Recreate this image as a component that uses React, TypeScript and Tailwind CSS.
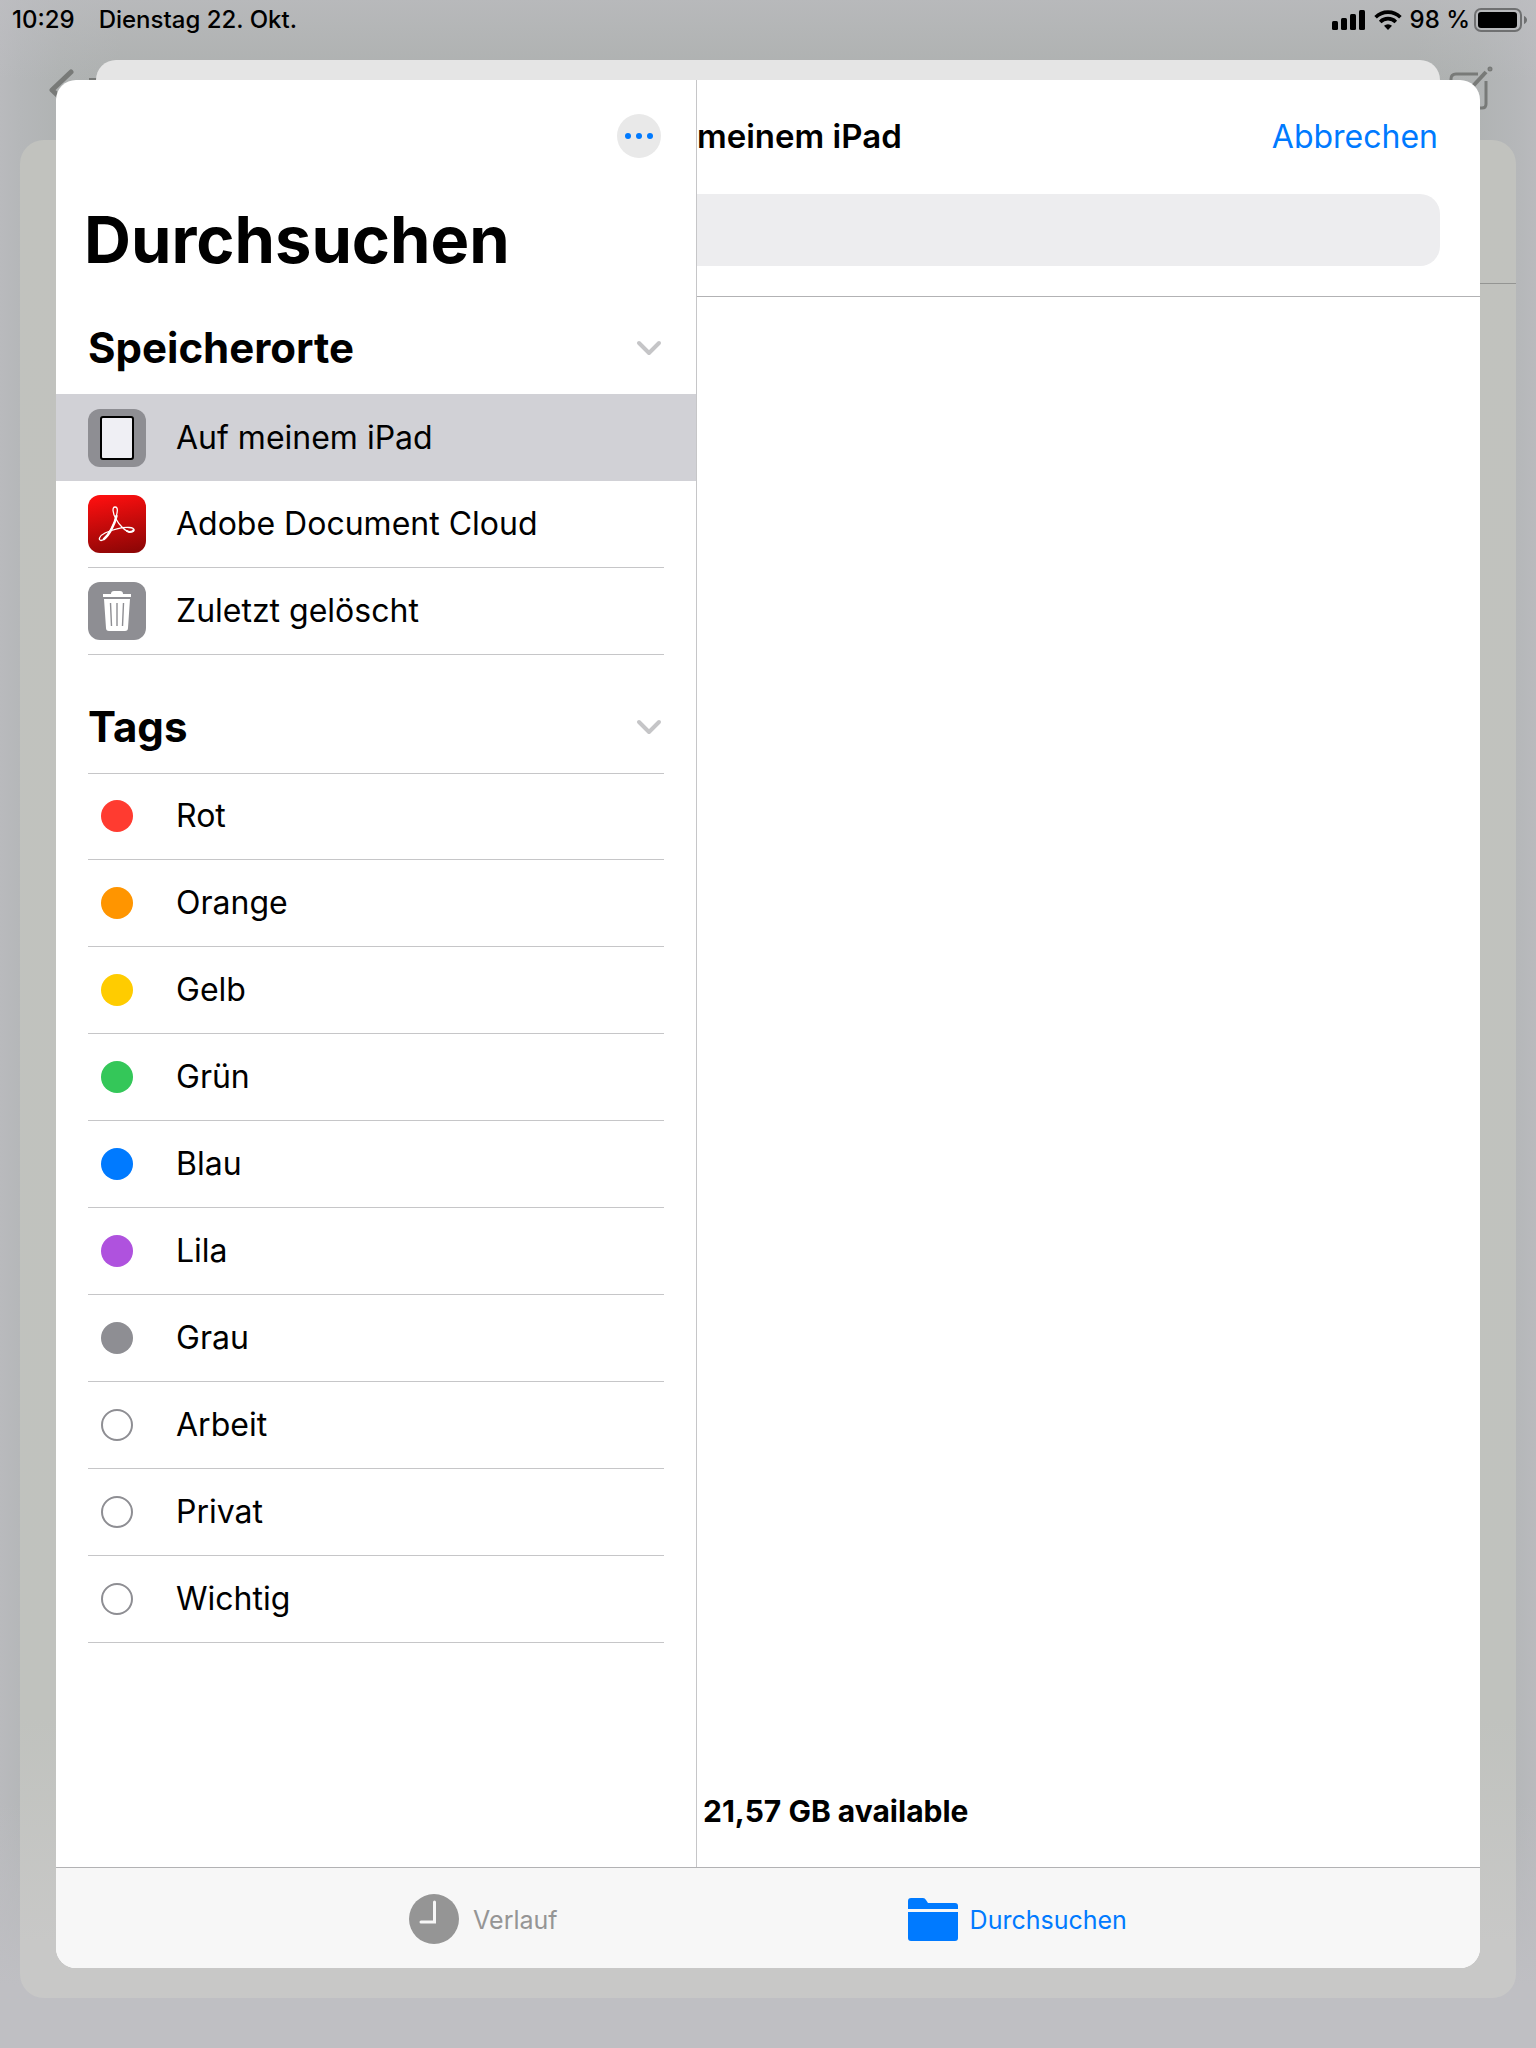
import type { ReactNode } from 'react';

type Tag = { name: string; dot: string };

const tags: Tag[] = [
  { name: 'Rot', dot: 'bg-[#ff3b30]' },
  { name: 'Orange', dot: 'bg-[#ff9500]' },
  { name: 'Gelb', dot: 'bg-[#ffcc00]' },
  { name: 'Grün', dot: 'bg-[#34c759]' },
  { name: 'Blau', dot: 'bg-[#007aff]' },
  { name: 'Lila', dot: 'bg-[#af52de]' },
  { name: 'Grau', dot: 'bg-[#8e8e93]' },
  { name: 'Arbeit', dot: 'border-2 border-[#8e8e93]' },
  { name: 'Privat', dot: 'border-2 border-[#8e8e93]' },
  { name: 'Wichtig', dot: 'border-2 border-[#8e8e93]' },
];

function StatusBar() {
  return (
    <header className="relative flex h-10 items-center justify-between pl-3 pr-2 text-2xl font-medium">
      <div className="flex gap-6">
        <span>10:29</span>
        <span>Dienstag 22. Okt.</span>
      </div>
      <div className="flex items-center gap-2">
        <svg className="h-5 w-[34px]" viewBox="0 0 34 20" aria-hidden="true">
          <rect x="0" y="11" width="6" height="9" rx="1.5" />
          <rect x="9" y="8" width="6" height="12" rx="1.5" />
          <rect x="18" y="4" width="6" height="16" rx="1.5" />
          <rect x="27" y="0" width="6" height="20" rx="1.5" />
        </svg>
        <svg className="h-5 w-7" viewBox="0 0 28 20" aria-hidden="true">
          <g fill="none" stroke="black" strokeWidth="3.6">
            <path d="M1.6 7.2a17.6 17.6 0 0 1 24.8 0" />
            <path d="M6.2 11.9a11 11 0 0 1 15.6 0" />
          </g>
          <path d="M14 20l-4-4.2a5.8 5.8 0 0 1 8 0z" />
        </svg>
        <div className="flex items-center gap-1">
          <span>98 %</span>
          <svg className="h-6 w-[54px]" viewBox="0 0 54 24" aria-hidden="true">
            <rect x="1" y="1" width="46" height="22" rx="6" fill="none" stroke="#6f7071" strokeWidth="2" />
            <rect x="4" y="4" width="39" height="16" rx="3" />
            <path d="M50 8c4 1.5 4 6.5 0 8z" fill="#6f7071" />
          </svg>
        </div>
      </div>
    </header>
  );
}

// Dimmed notes app behind the sheets
function NotesBackdrop() {
  return (
    <div className="absolute inset-0 bg-[linear-gradient(to_bottom,#bfbfc399_0px,#bfbfc300_80px,#bfbfc300_88%,#bfbfc3_97%),linear-gradient(to_right,#b9babd_0px,#b5b7b9_20px,#b0b3b3_60px,#adb0af_120px,#adb0af_calc(100%-120px),#b0b3b3_calc(100%-60px),#b5b7b9_calc(100%-20px),#b9babd)]">
      <svg className="absolute left-12 top-[67px] h-11 w-7" viewBox="0 0 28 44" fill="none" stroke="#787a78" strokeWidth="5" strokeLinecap="round" strokeLinejoin="round">
        <path d="M23 5L4 23L23 41" />
      </svg>
      <span className="absolute left-[89px] top-[78px] h-1 w-4 bg-[#787a78]" />
      <svg className="absolute right-[42px] top-[66px] h-11 w-[46px]" viewBox="0 0 46 44" fill="none" stroke="#787a78" strokeWidth="3">
        <path d="M30 8H8Q3 8 3 13V37Q3 42 8 42H34Q38 42 38 38V15" />
        <path d="M25 20L38 6" strokeWidth="4" />
        <circle cx="42" cy="3" r="1" />
      </svg>
      <div className="absolute inset-x-5 bottom-[50px] top-[140px] rounded-3xl bg-[linear-gradient(to_bottom,#c1c2be,#c0c2be_85%,#c8c8c7_97%)]">
        <div className="ml-auto mt-[143px] h-px w-1/2 bg-[#949593]" />
      </div>
    </div>
  );
}

function IPadIcon() {
  return (
    <svg className="size-[58px]" viewBox="0 0 58 58" aria-hidden="true">
      <rect width="58" height="58" rx="12" fill="#8e8e93" />
      <rect x="13" y="8" width="32" height="42" rx="2" fill="#efeff4" stroke="black" strokeWidth="2" />
    </svg>
  );
}

function AcrobatIcon() {
  return (
    <svg className="size-[58px]" viewBox="0 0 58 58" aria-hidden="true">
      <defs>
        <linearGradient id="acrobat" x1="0.4" y1="0" x2="0.6" y2="1">
          <stop offset="0" stopColor="#fb0f0f" />
          <stop offset="1" stopColor="#8f0606" />
        </linearGradient>
      </defs>
      <rect width="58" height="58" rx="12" fill="url(#acrobat)" />
      <g fill="none" stroke="white" strokeLinecap="round" strokeLinejoin="round">
        <path
          d="M27 12C24 12 24.5 18 28 24C31 30 38 37 42 37C47 37 48 33 41 32.5C33 32 24 35 17 38C11 41 10 45 13 45.5C18 45 27 30 29 18C30 13 28.5 12 27 12Z"
          strokeWidth="1.3"
        />
        <path d="M28.5 21C26.5 30 21 40 16 44" strokeWidth="2.4" />
        <path d="M39 36C41 37.5 45 37 45.5 35" strokeWidth="2" />
      </g>
    </svg>
  );
}

function TrashIcon() {
  return (
    <svg className="size-[58px]" viewBox="0 0 58 58" aria-hidden="true">
      <rect width="58" height="58" rx="12" fill="#8e8e93" />
      <path d="M15 12H23Q23 9 26 9H32Q35 9 35 12H43V15H15Z" fill="white" />
      <path d="M16 17H42L40 46Q40 49 37 49H21Q18 49 18 46Z" fill="white" />
      <path d="M22.5 21L23.5 44M29 21V44M35.5 21L34.5 44" stroke="#8e8e93" strokeWidth="1.4" />
    </svg>
  );
}

function Chevron() {
  return (
    <svg className="h-4 w-[26px]" viewBox="0 0 26 16" fill="none" stroke="#c5c5c7" strokeWidth="4" strokeLinecap="round" strokeLinejoin="round">
      <path d="M3 3L13 13L23 3" />
    </svg>
  );
}

function SectionHeader({ title }: { title: string }) {
  return (
    <button type="button" className="flex h-[92px] w-full items-center justify-between pl-8 pr-[34px]">
      <h2 className="text-[42px] font-bold leading-none">{title}</h2>
      <Chevron />
    </button>
  );
}

function Row({ icon, label, active = false }: { icon: ReactNode; label: string; active?: boolean }) {
  return (
    <li className={active ? 'bg-[#d1d1d6]' : ''}>
      <button
        type="button"
        className={
          active
            ? 'flex h-[87px] w-full items-center px-8 text-left text-[32px]'
            : 'mx-8 flex h-[87px] w-[calc(100%-64px)] items-center border-b border-[#c6c6c8] text-left text-[32px]'
        }
      >
        <span className="flex w-[58px] justify-center">{icon}</span>
        <span className="pl-[30px]">{label}</span>
      </button>
    </li>
  );
}

function Sidebar() {
  return (
    <nav className="w-[641px] shrink-0 border-r border-[#c6c6c8]">
      <div className="flex justify-end pr-[35px] pt-[34px]">
        <button type="button" aria-label="Mehr" className="flex size-11 items-center justify-center gap-[5px] rounded-full bg-[#e9e9e9]">
          <span className="size-1.5 rounded-full bg-[#007aff]" />
          <span className="size-1.5 rounded-full bg-[#007aff]" />
          <span className="size-1.5 rounded-full bg-[#007aff]" />
        </button>
      </div>
      <h1 className="pl-7 pt-[46px] text-[65px] font-bold leading-[72px]">Durchsuchen</h1>
      <div className="pt-[26px]">
        <SectionHeader title="Speicherorte" />
        <ul>
          <Row icon={<IPadIcon />} label="Auf meinem iPad" active />
          <Row icon={<AcrobatIcon />} label="Adobe Document Cloud" />
          <Row icon={<TrashIcon />} label="Zuletzt gelöscht" />
        </ul>
      </div>
      <div className="pb-32 pt-[26px]">
        <SectionHeader title="Tags" />
        <div className="mx-8 h-px bg-[#c6c6c8]" />
        <ul className="-mt-px">
          {tags.map((tag) => (
            <Row key={tag.name} icon={<span className={`size-8 rounded-full ${tag.dot}`} />} label={tag.name} />
          ))}
        </ul>
      </div>
    </nav>
  );
}

function FilesPane() {
  return (
    <section className="flex flex-1 flex-col">
      <div className="border-b border-[#b2b2b4] pb-[30px]">
        <div className="flex h-[114px] items-center justify-between pr-[42px]">
          <h2 className="text-[33px] font-semibold">meinem iPad</h2>
          <button type="button" className="text-[32px] text-[#007aff]">Abbrechen</button>
        </div>
        <div className="pr-10">
          <input type="search" aria-label="Suchen" className="block h-[72px] w-full rounded-r-[20px] bg-[#ededef] px-6 text-[32px] outline-none" />
        </div>
      </div>
      <p className="mt-auto pb-9 pl-1.5 text-[30px] font-bold leading-10">21,57 GB available</p>
    </section>
  );
}

function TabBar() {
  return (
    <footer className="flex h-[101px] items-center justify-center gap-[350px] border-t border-[#b2b2b4] bg-[#f7f7f7] pt-0.5 text-[25px]">
      <button type="button" className="flex items-center gap-3.5 text-[#959595]">
        <svg className="size-[50px]" viewBox="0 0 50 50" aria-hidden="true">
          <circle cx="25" cy="25" r="25" fill="#959595" />
          <path d="M25.5 8V28H12" fill="none" stroke="#f7f7f7" strokeWidth="3" strokeLinecap="round" />
        </svg>
        <span className="pt-1">Verlauf</span>
      </button>
      <button type="button" className="flex items-center gap-3 text-[#007aff]">
        <svg className="h-[43px] w-[50px]" viewBox="0 0 50 43" fill="#007aff" aria-hidden="true">
          <path d="M0 11V3Q0 0 3 0H15Q17 0 18 2L20 5H47Q50 5 50 8V11Z" />
          <path d="M0 14H50V40Q50 43 47 43H3Q0 43 0 40Z" />
        </svg>
        <span className="pt-1">Durchsuchen</span>
      </button>
    </footer>
  );
}

export default function App() {
  return (
    <div className="relative flex min-h-screen flex-col font-[Inter,sans-serif] text-black">
      <NotesBackdrop />
      <StatusBar />
      <div className="relative flex flex-1 flex-col px-14 pb-20 pt-5">
        <div className="mx-10 h-5 rounded-t-[20px] bg-[#e5e5e5]" />
        <main className="flex flex-1 flex-col overflow-hidden rounded-[20px] bg-white">
          <div className="flex flex-1">
            <Sidebar />
            <FilesPane />
          </div>
          <TabBar />
        </main>
      </div>
    </div>
  );
}
